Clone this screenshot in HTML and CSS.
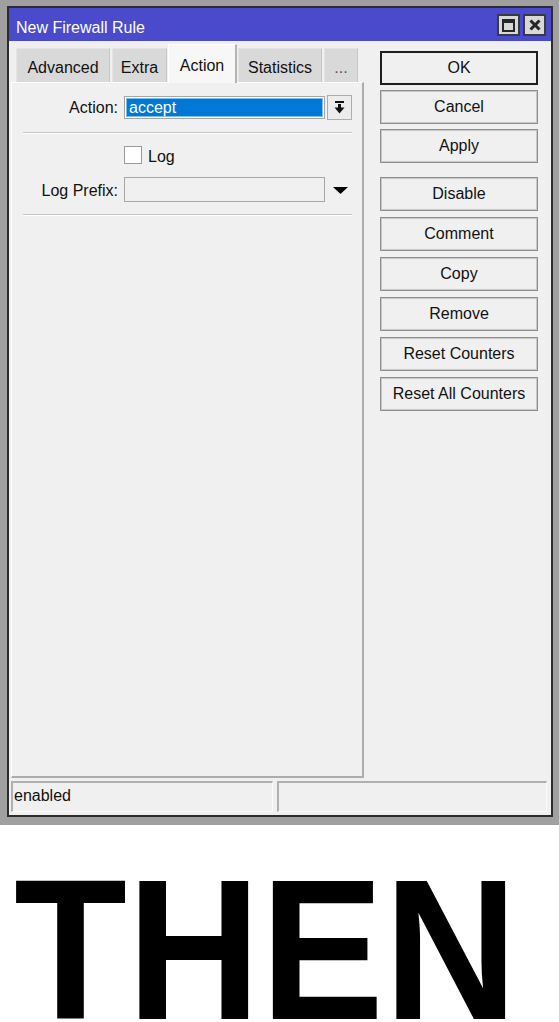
FILE: index.html
```html
<!DOCTYPE html>
<html lang="en">
<head>
<meta charset="utf-8">
<title>New Firewall Rule</title>
<link rel="stylesheet" href="styles.css">
</head>
<body>
<div class="screen">
  <div class="window">
    <div class="titlebar">
      <span class="title">New Firewall Rule</span>
      <div class="title-btns">
        <span class="tbtn">
          <svg width="13" height="13" viewBox="0 0 13 13"><path fill="#262626" fill-rule="evenodd" d="M0 0H13V13H0Z M2 4H11V11H2Z"/></svg>
        </span>
        <span class="tbtn">
          <svg width="12" height="12" viewBox="0 0 12 12"><path d="M1.5 1.5L10.5 10.5M10.5 1.5L1.5 10.5" stroke="#262626" stroke-width="3" fill="none"/></svg>
        </span>
      </div>
    </div>
    <div class="body">
      <div class="main">
        <div class="leftcol">
          <div class="tabs">
            <div class="tab tab-advanced">Advanced</div>
            <div class="tab tab-extra">Extra</div>
            <div class="tab tab-action active">Action</div>
            <div class="tab tab-stats">Statistics</div>
            <div class="tab tab-more">...</div>
          </div>
          <div class="panel">
            <div class="row row-action">
              <label class="lbl">Action:</label>
              <div class="select"><span class="select-val">accept</span></div>
              <span class="dd-btn">
                <svg width="11" height="13" viewBox="0 0 11 13"><rect x="1" y="0" width="9" height="2" fill="#111"/><rect x="4" y="3" width="3" height="4" fill="#111"/><path d="M0.5 6.5H10.5L5.5 12.5Z" fill="#111"/></svg>
              </span>
            </div>
            <div class="sep"></div>
            <div class="row row-check">
              <span class="checkbox"></span>
              <span class="check-lbl">Log</span>
            </div>
            <div class="row row-prefix">
              <label class="lbl">Log Prefix:</label>
              <div class="input"></div>
              <svg class="tri" width="15" height="7" viewBox="0 0 15 7"><path d="M0 0H15L7.5 7Z" fill="#000"/></svg>
            </div>
            <div class="sep sep2"></div>
          </div>
        </div>
        <div class="buttons">
          <div class="group group-top">
            <button class="btn btn-default">OK</button>
            <button class="btn">Cancel</button>
            <button class="btn">Apply</button>
          </div>
          <div class="group group-bottom">
            <button class="btn">Disable</button>
            <button class="btn">Comment</button>
            <button class="btn">Copy</button>
            <button class="btn">Remove</button>
            <button class="btn">Reset Counters</button>
            <button class="btn">Reset All Counters</button>
          </div>
        </div>
      </div>
      <div class="statusbar">
        <div class="sfield sfield-state">enabled</div>
        <div class="sfield sfield-extra"></div>
      </div>
    </div>
  </div>
</div>
<div class="then"><span class="then-text">THEN</span></div>
</body>
</html>
```

FILE: styles.css
```css
* {
  box-sizing: border-box;
}

html, body {
  margin: 0;
  padding: 0;
  background: #fff;
}

body {
  font-family: "Liberation Sans", Arial, sans-serif;
  font-size: 16px;
  color: #000;
  overflow: hidden;
}

/* grey desktop strip around the dialog */
.screen {
  background: #a0a0a0;
  padding: 6px 6px 8px 7px;
}

.window {
  height: 811px;
  border: 2px solid #2c2c2c;
  background: #f0f0f0;
  display: flex;
  flex-direction: column;
}

/* title bar */
.titlebar {
  flex: none;
  height: 33px;
  background: #4a4bcc;
  display: flex;
  justify-content: space-between;
  padding: 0 5px 0 7px;
}

.title {
  color: #fff;
  line-height: 18px;
  padding-top: 11px;
}

.title-btns {
  display: flex;
  gap: 3px;
  padding-top: 6px;
}

.tbtn {
  width: 23px;
  height: 22px;
  border: 2px solid #3a3a3a;
  background: #d8d8d8;
  display: flex;
  align-items: center;
  justify-content: center;
}

/* dialog body */
.body {
  flex: 1;
  display: flex;
  flex-direction: column;
  padding: 2px 4px 3px 2px;
}

.main {
  flex: 1;
  display: flex;
}

.leftcol {
  width: 353px;
  display: flex;
  flex-direction: column;
}

/* tabs */
.tabs {
  height: 39px;
  display: flex;
  align-items: flex-end;
  padding-left: 5px;
}

.tab {
  height: 34px;
  background: #d9d9d9;
  border-top: 1px solid #e4e4e4;
  border-left: 1px solid #e4e4e4;
  border-right: 1px solid #c6c6c6;
  line-height: 18px;
  padding-top: 10px;
  text-align: center;
  color: #111;
}

.tab-advanced { width: 94px; }
.tab-extra { width: 55px; margin-left: 2px; }
.tab-action { width: 69px; margin-left: 1px; }
.tab-stats { width: 84px; margin-left: 1px; }
.tab-more { width: 34px; margin-left: 2px; color: #555; }

.tab.active {
  height: 39px;
  background: #f7f7f7;
  border-top: 1px solid #fff;
  border-left: 1px solid #fff;
  border-right: 2px solid #b4b4b4;
  padding-top: 12px;
  position: relative;
  top: 1px;
}

/* tab page */
.panel {
  flex: 1;
  border-top: 1px solid #fff;
  border-left: 1px solid #fff;
  border-right: 2px solid #acacac;
  border-bottom: 2px solid #acacac;
  display: flex;
  flex-direction: column;
}

.row {
  display: flex;
  align-items: center;
}

.lbl {
  width: 106px;
  text-align: right;
  color: #111;
}

.row-action {
  height: 25px;
  margin-top: 12px;
}

.select {
  width: 201px;
  height: 23px;
  margin-left: 6px;
  border: 1px solid #a6a6a6;
  background: #fff;
  padding: 1px;
}

.select-val {
  display: block;
  height: 100%;
  background: #0078d7;
  border: 1px solid #7fbdf0;
  color: #fff;
  line-height: 17px;
  padding-left: 2px;
}

.dd-btn {
  width: 25px;
  height: 25px;
  margin-left: 2px;
  border: 1px solid #adadad;
  background: #ececec;
  display: flex;
  align-items: center;
  justify-content: center;
}

.sep {
  width: 329px;
  margin: 12px 0 0 11px;
  border-top: 1px solid #c4c4c4;
  border-bottom: 1px solid #fff;
}

.row-check {
  height: 18px;
  margin-top: 12px;
  padding-left: 112px;
  align-items: flex-end;
}

.checkbox {
  width: 18px;
  height: 18px;
  border: 1px solid #9a9a9a;
  background: #fff;
}

.check-lbl {
  margin-left: 6px;
  line-height: 18px;
  position: relative;
  top: 2px;
  color: #111;
}

.row-prefix {
  height: 25px;
  margin-top: 13px;
}

.row-prefix .lbl {
  padding-top: 3px;
}

.input {
  width: 201px;
  height: 25px;
  margin-left: 6px;
  border: 1px solid #a6a6a6;
  background: #f0f0f0;
}

.tri {
  margin-left: 8px;
  margin-top: 1px;
}

/* right-hand command buttons */
.buttons {
  width: 158px;
  margin-left: 16px;
  padding-top: 8px;
  display: flex;
  flex-direction: column;
}

.group {
  display: flex;
  flex-direction: column;
}

.group-top {
  gap: 5px;
}

.group-bottom {
  gap: 6px;
  margin-top: 14px;
}

.btn {
  height: 34px;
  width: 158px;
  margin: 0;
  padding: 0;
  font-family: inherit;
  font-size: 16px;
  color: #111;
  background: #f0f0f0;
  border: 1px solid #8e8e8e;
  box-shadow: inset 0 0 0 1px #c9c9c9;
  text-align: center;
}

.btn-default {
  border: 2px solid #1f1f1f;
  box-shadow: none;
}

/* status bar */
.statusbar {
  flex: none;
  height: 31px;
  margin-top: 3px;
  display: flex;
  gap: 4px;
}

.sfield {
  border-top: 2px solid #b0b0b0;
  border-left: 2px solid #b0b0b0;
  border-bottom: 1px solid #fbfbfb;
  border-right: 1px solid #fbfbfb;
  line-height: 18px;
  padding: 4px 0 0 1px;
  color: #111;
}

.sfield-state {
  width: 262px;
}

.sfield-extra {
  flex: 1;
}

/* caption below the dialog */
.then {
  height: 197px;
  padding-top: 55px;
}

.then-text {
  display: block;
  margin-left: 14px;
  font-size: 200px;
  font-weight: bold;
  line-height: 140px;
  color: #000;
  transform: scaleX(0.925);
  transform-origin: 0 0;
  white-space: nowrap;
}
```
